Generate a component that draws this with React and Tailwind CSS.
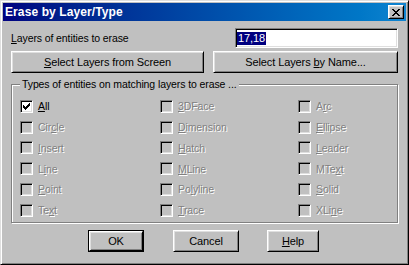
import React from 'react';

const raised =
  'bg-[#c0c0c0] border border-t-white border-l-white border-r-black border-b-black shadow-[inset_1px_1px_0_#dfdfdf,inset_-1px_-1px_0_#808080]';
const sunken =
  'border border-t-[#808080] border-l-[#808080] border-r-white border-b-white shadow-[inset_1px_1px_0_#000,inset_-1px_-1px_0_#dfdfdf]';
const dim = 'text-[#808080] [text-shadow:1px_1px_0_#fff]';

function Key({ text, k }) {
  // underline one access-key letter
  if (k == null) return text;
  return (
    <>
      {text.slice(0, k)}
      <span className="underline underline-offset-1">{text[k]}</span>
      {text.slice(k + 1)}
    </>
  );
}

function CheckMark() {
  const xs = [3, 4, 5, 6, 7, 8, 9];
  const tops = [5, 6, 7, 6, 5, 4, 3];
  return (
    <svg width="11" height="11" viewBox="1 1 11 11" shapeRendering="crispEdges">
      {xs.map((x, i) => (
        <rect key={x} x={x} y={tops[i]} width="1" height="3" fill="#000" />
      ))}
    </svg>
  );
}

function Check({ label, k, checked, enabled }) {
  return (
    <div className="flex h-[20.8px] items-center gap-[5px]">
      <div className={`size-[13px] shrink-0 ${sunken} ${enabled ? 'bg-white' : 'bg-[#c0c0c0]'}`}>
        {checked && <CheckMark />}
      </div>
      <span className={enabled ? 'text-black' : dim}>
        <Key text={label} k={k} />
      </span>
    </div>
  );
}

const cols = [
  [
    ['All', 0, true, true],
    ['Circle', 3],
    ['Insert', 0],
    ['Line', 1],
    ['Point', 0],
    ['Text', 2],
  ],
  [
    ['3DFace', 0],
    ['Dimension', 0],
    ['Hatch', 0],
    ['MLine', 0],
    ['Polyline', 2],
    ['Trace', 0],
  ],
  [
    ['Arc', 1],
    ['Ellipse', 0],
    ['Leader', 0],
    ['MText', 3],
    ['Solid', 0],
    ['XLine', 3],
  ],
];

function CloseGlyph() {
  const rows = ['xx....xx', '.xx..xx.', '..xxxx..', '...xx...', '..xxxx..', '.xx..xx.', 'xx....xx'];
  return (
    <svg width="8" height="7" shapeRendering="crispEdges">
      {rows.flatMap((r, y) =>
        r.split('').map((c, x) => (c === 'x' ? <rect key={`${x}-${y}`} x={x} y={y} width="1" height="1" fill="#000" /> : null))
      )}
    </svg>
  );
}

export default function App() {
  return (
    <div className="h-[265px] w-[409px] bg-[#c0c0c0] font-['Liberation_Sans',Arial,sans-serif] text-[10.5px] leading-none tracking-[-0.1px] text-black">
      <div className="flex h-full flex-col border border-t-[#dfdfdf] border-l-[#dfdfdf] border-r-black border-b-black p-[2px] shadow-[inset_1px_1px_0_#fff,inset_-1px_-1px_0_#808080]">
        {/* title bar */}
        <div className="flex h-[18px] items-center justify-between bg-gradient-to-r from-[#000080] to-[#1084d0] pl-[2px] pr-[2px]">
          <span className="text-[12px] font-bold tracking-[0.1px] text-white">Erase by Layer/Type</span>
          <button className={`flex h-[14px] w-[16px] items-center justify-center ${raised}`}>
            <CloseGlyph />
          </button>
        </div>

        <div className="flex flex-1 flex-col pl-[8px] pr-[8px]">
          {/* layers row */}
          <div className="mt-[7px] flex h-[20px] items-center justify-between">
            <span>
              <Key text="Layers of entities to erase" k={0} />
            </span>
            <div className={`flex h-[20px] w-[163px] items-center bg-white pl-[1px] ${sunken}`}>
              <span className="bg-[#000080] px-[1px] py-[1px] text-[11px] text-white">17,18</span>
            </div>
          </div>

          {/* select buttons */}
          <div className="mt-[3px] flex h-[22px] justify-between text-[11px]">
            <button className={`w-[193px] ${raised}`}>
              <Key text="Select Layers from Screen" k={0} />
            </button>
            <button className={`w-[185px] ${raised}`}>
              <Key text="Select Layers by Name..." k={14} />
            </button>
          </div>

          {/* group box */}
          <div className="relative mt-[11px] h-[139px] border border-[#808080] shadow-[inset_1px_1px_0_#fff,1px_1px_0_#fff]">
            <span className="absolute left-[8px] top-[-6px] bg-[#c0c0c0] px-[2px]">
              Types of entities on matching layers to erase ...
            </span>
            <div className="ml-[8px] mt-[11px] grid grid-cols-[140px_138px_1fr]">
              {cols.map((col, ci) => (
                <div key={ci} className="flex flex-col">
                  {col.map(([label, k, checked, enabled]) => (
                    <Check key={label} label={label} k={k} checked={checked} enabled={enabled} />
                  ))}
                </div>
              ))}
            </div>
          </div>

          {/* dialog buttons */}
          <div className="mt-[7px] flex h-[22px] pl-[77px] text-[11px]">
            <div className="h-[22px] w-[56px] border border-black">
              <button className={`h-full w-full ${raised}`}>OK</button>
            </div>
            <button className={`ml-[29px] h-[22px] w-[66px] ${raised}`}>Cancel</button>
            <button className={`ml-[28px] h-[22px] w-[52px] ${raised}`}>
              <Key text="Help" k={0} />
            </button>
          </div>
        </div>
      </div>
    </div>
  );
}
